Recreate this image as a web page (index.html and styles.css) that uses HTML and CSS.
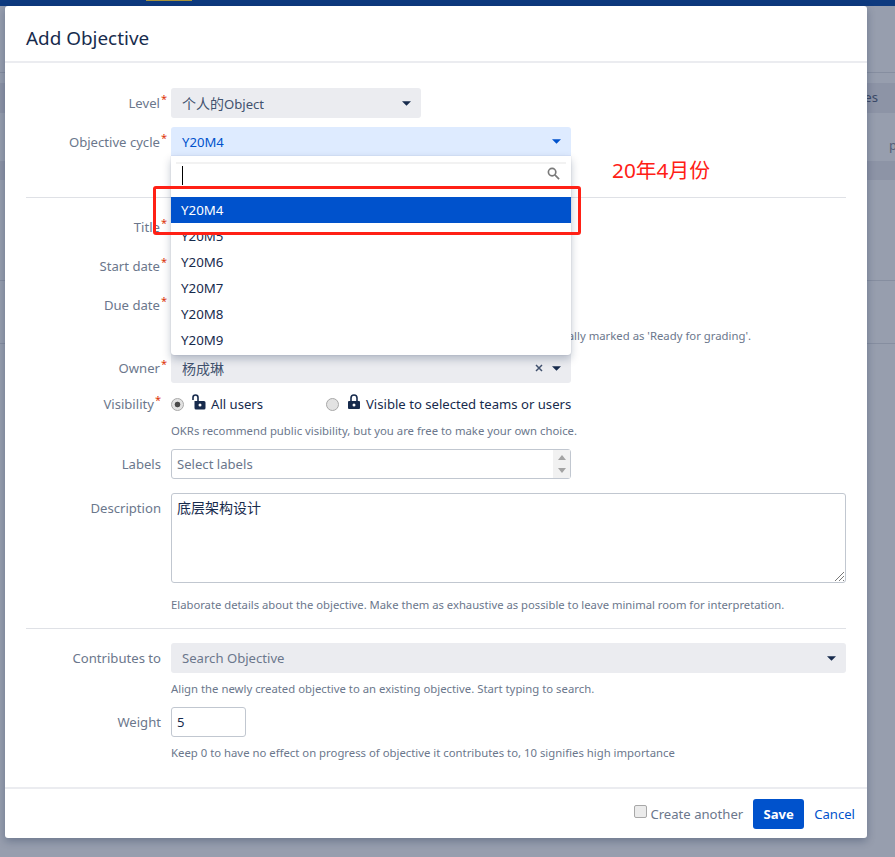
FILE: index.html
```html
<!DOCTYPE html>
<html lang="en">
<head>
<meta charset="utf-8">
<title>Add Objective</title>
<link rel="stylesheet" href="styles.css">
</head>
<body>
<div class="backdrop">
  <div class="topbar"><span class="topbar-mark"></span></div>
  <div class="bg-line bg-line-first"></div>
  <div class="bg-band bg-band-tab"><span>es</span></div>
  <div class="bg-p">p</div>
  <div class="bg-band bg-band-head"></div>
  <div class="bg-line bg-line-mid"></div>
  <div class="bg-line bg-line-row"></div>
</div>

<div class="modal">
  <header class="modal-head"><h2>Add Objective</h2></header>
  <main class="modal-body">
    <div class="row row-a">
      <label class="lbl">Level<sup>*</sup></label>
      <div class="select w250"><span><span class="cjk">个人的</span>Object</span><svg class="caret" viewBox="0 0 10 5"><path d="M0 0h10L5 5z"/></svg></div>
    </div>
    <div class="row row-b">
      <label class="lbl">Objective cycle<sup>*</sup></label>
      <div class="select select-open w400"><span>Y20M4</span><svg class="caret" viewBox="0 0 10 5"><path d="M0 0h10L5 5z"/></svg></div>
    </div>
    <hr class="rule rule-first">
    <div class="row row-title"><label class="lbl">Title<sup>*</sup></label></div>
    <div class="row row-date"><label class="lbl">Start date<sup>*</sup></label></div>
    <div class="row row-date"><label class="lbl">Due date<sup>*</sup></label></div>
    <p class="hint hint-due">Objective will be automatically marked as 'Ready for grading'.</p>
    <div class="row row-owner">
      <label class="lbl">Owner<sup>*</sup></label>
      <div class="select w400"><span class="cjk">杨成琳</span>
        <svg class="clear" viewBox="0 0 8 8"><path d="M1 1l6 6M7 1L1 7"/></svg>
        <svg class="caret caret-owner" viewBox="0 0 10 5"><path d="M0 0h10L5 5z"/></svg>
      </div>
    </div>
    <div class="row row-vis">
      <label class="lbl lbl-in">Visibility<sup>*</sup></label>
      <div class="radios">
        <span class="radio-item radio-all">
          <input type="radio" name="vis" class="radio" checked>
          <svg class="lock" viewBox="0 0 14 16"><path d="M2.500 7h9.500a1.500 1.500 0 0 1 1.500 1.500V14a1.500 1.500 0 0 1-1.500 1.500H4A1.500 1.500 0 0 1 2.500 14V7z"/><path class="lock-arc" d="M1 6V3.500a2.500 2.500 0 0 1 5 0V7"/><circle class="lock-hole" cx="8" cy="11" r="1.500"/></svg>
          All users
        </span>
        <span class="radio-item">
          <input type="radio" name="vis" class="radio">
          <svg class="lock" viewBox="0 0 14 16"><path d="M2 7h10a1 1 0 0 1 1 1v6a1 1 0 0 1-1 1H2a1 1 0 0 1-1-1V8a1 1 0 0 1 1-1z"/><path class="lock-arc" d="M4 7V4a3 3 0 0 1 6 0v3"/><circle class="lock-hole" cx="7" cy="11" r="1.500"/></svg>
          Visible to selected teams or users
        </span>
      </div>
    </div>
    <p class="hint hint-vis">OKRs recommend public visibility, but you are free to make your own choice.</p>
    <div class="row row-labels">
      <label class="lbl">Labels</label>
      <div class="listbox w400"><span>Select labels</span>
        <div class="spin"><svg viewBox="0 0 8 5"><path d="M4 0l4 5H0z"/></svg><svg viewBox="0 0 8 5"><path d="M0 0h8L4 5z"/></svg></div>
      </div>
    </div>
    <div class="row row-desc">
      <label class="lbl">Description</label>
      <div class="textarea cjk">底层架构设计
        <svg class="grip" viewBox="0 0 9 9"><path d="M0 9L9 0M4 9l5-5M8 9l1-1"/></svg>
      </div>
    </div>
    <p class="hint hint-desc">Elaborate details about the objective. Make them as exhaustive as possible to leave minimal room for interpretation.</p>
    <hr class="rule rule-second">
    <div class="row row-contrib">
      <label class="lbl">Contributes to</label>
      <div class="select wfull placeholder"><span>Search Objective</span><svg class="caret" viewBox="0 0 10 5"><path d="M0 0h10L5 5z"/></svg></div>
    </div>
    <p class="hint hint-contrib">Align the newly created objective to an existing objective. Start typing to search.</p>
    <div class="row row-weight">
      <label class="lbl">Weight</label>
      <div class="weight">5</div>
    </div>
    <p class="hint hint-weight">Keep 0 to have no effect on progress of objective it contributes to, 10 signifies high importance</p>
  </main>
  <footer class="modal-foot">
    <input type="checkbox" class="check">
    <span class="create">Create another</span>
    <button class="save">Save</button>
    <a class="cancel">Cancel</a>
  </footer>
</div>

<div class="dropdown">
  <div class="search">
    <span class="cursor"></span>
    <svg class="search-icon" viewBox="0 0 14 14"><circle cx="5.500" cy="5.500" r="4"/><path d="M8.500 8.500L13 13"/></svg>
  </div>
  <ul class="options">
    <li class="active">Y20M4</li>
    <li>Y20M5</li>
    <li>Y20M6</li>
    <li>Y20M7</li>
    <li>Y20M8</li>
    <li>Y20M9</li>
  </ul>
</div>

<div class="callout"></div>
<div class="callout-note">20年4月份</div>
</body>
</html>
```

FILE: styles.css
```css
* { box-sizing: border-box; }
html, body { margin: 0; height: 100%; }
body {
  position: relative;
  width: 895px;
  height: 857px;
  overflow: hidden;
  background: #979eae;
  font-family: "Noto Sans", "Noto Sans CJK SC", sans-serif;
  font-size: 13.125px;
  color: #172b4d;
}
.cjk { font-size: 14px; }

/* dimmed page behind the dialog */
.backdrop { height: 857px; }
.topbar { height: 6px; background: #0e3a7f; position: relative; }
.topbar-mark { position: absolute; left: 146px; top: 0; width: 46px; height: 1px; background: #a8933a; }
.bg-line { height: 1px; background: #868ea0; }
.bg-line-first { margin-top: 66px; }
.bg-band { background: #8d94a6; color: #3b4a68; }
.bg-band-tab { height: 30px; margin-top: 10px; text-align: right; padding: 5px 17px 0 0; }
.bg-p { height: 48px; padding: 22px 0 0 889px; color: #555f78; line-height: 20px; }
.bg-band-head { height: 19px; }
.bg-line-mid { margin-top: 100px; }
.bg-line-row { margin-top: 62px; }

/* dialog */
.modal {
  position: absolute;
  left: 5px;
  top: 6px;
  width: 862px;
  height: 832px;
  background: #fff;
  border-radius: 3px;
  box-shadow: 0 3px 8px rgba(9, 30, 66, .3);
  display: flex;
  flex-direction: column;
}
.modal-head { height: 57px; border-bottom: 2px solid #ebecf0; padding: 19px 21px 0; }
.modal-head h2 { margin: 0; font-size: 18.900px; line-height: 27px; font-weight: 400; }
.modal-body { flex: 1; padding: 25px 21px 0; }
.modal-foot {
  height: 51px;
  border-top: 2px solid #ebecf0;
  display: flex;
  align-items: center;
  justify-content: flex-end;
  padding: 0 12px 0 0;
}

/* form rows */
.row { display: flex; align-items: center; gap: 10px; }
.lbl { width: 135px; flex: none; text-align: right; color: #6b778c; line-height: 20px; white-space: nowrap; }
.lbl sup { color: #de350b; font-size: 11px; line-height: 0; vertical-align: 5px; margin-left: 1px; margin-right: -6px; }
.lbl-in sup { margin-right: 0; }
.row-a { height: 30px; }
.row-b { height: 29px; margin-top: 9px; }
.rule { border: 0; border-top: 1px solid #dfe1e6; margin: 0; }
.rule-first { margin-top: 41px; }
.row-title { height: 30px; margin-top: 14px; }
.row-date { height: 30px; margin-top: 9px; }
.row-owner { height: 30px; margin-top: 9px; }
.row-vis { height: 20px; margin-top: 11px; }
.row-labels { height: 30px; margin-top: 10px; }
.row-desc { height: 90px; margin-top: 14px; align-items: flex-start; }
.row-contrib { height: 30px; margin-top: 14px; }
.row-weight { height: 30px; margin-top: 10px; }
.rule-second { margin-top: 15px; }

.row-desc .lbl { padding-top: 5px; }

.hint { margin: 0 0 0 145px; font-size: 11.330px; line-height: 16px; color: #6b778c; white-space: nowrap; }
.hint-due { margin-left: 0; width: 725px; text-align: right; height: 16px; margin-top: 8px; margin-bottom: 9px; }
.hint-vis { margin-top: 9px; }
.hint-desc { margin-top: 14px; font-size: 11.250px; }
.hint-contrib { margin-top: 8px; }
.hint-weight { margin-top: 8px; }

.select {
  height: 30px;
  border-radius: 3px;
  background: #ebecf0;
  color: #42526e;
  display: flex;
  align-items: center;
  justify-content: space-between;
  padding: 0 10px 0 11px;
  flex: none;
}
.w250 { width: 250px; }
.w400 { width: 400px; }
.wfull { width: 675px; }
.select-open { background: #deebff; color: #0052cc; border-radius: 3px 3px 0 0; height: 29px; }
.select-open .caret { fill: #0052cc; }
.placeholder { color: #6b778c; }
.caret { width: 9px; height: 5px; fill: #172b4d; flex: none; }
.caret-owner { margin-left: 9px; }
.clear { width: 8px; height: 8px; margin-left: auto; stroke: #42526e; stroke-width: 1.500; fill: none; flex: none; }

.radios { display: flex; align-items: center; height: 20px; }
.radio-item { display: flex; align-items: center; white-space: nowrap; }
.radio-all { width: 155px; }
.radio {
  appearance: none;
  width: 13px;
  height: 13px;
  margin: 0 8px 0 0;
  border-radius: 50%;
  border: 1px solid #a8a8a8;
  background: #e2e2e2;
}
.radio:checked { background: radial-gradient(circle, #4a4a4a 0 2.500px, #e2e2e2 3.200px); }
.lock { width: 14px; height: 16px; margin: -4px 5px 0 0; fill: #172b4d; }
.lock-arc { fill: none; stroke: #172b4d; stroke-width: 1.600; }
.lock-hole { fill: #fff; }

.listbox {
  height: 30px;
  border: 1px solid #c1c7d0;
  border-radius: 3px;
  display: flex;
  align-items: center;
  padding-left: 5px;
  color: #6b778c;
  position: relative;
  flex: none;
}
.spin {
  position: absolute;
  right: 0;
  top: 0;
  bottom: 0;
  width: 17px;
  background: #f1f1f1;
  display: flex;
  flex-direction: column;
  align-items: center;
  justify-content: center;
  gap: 8px;
}
.spin svg { width: 8px; height: 5px; fill: #a3a3a3; }

.textarea {
  position: relative;
  width: 675px;
  height: 90px;
  border: 1px solid #c1c7d0;
  border-radius: 3px;
  padding: 4px 5px;
  line-height: 20px;
  flex: none;
}
.grip { position: absolute; right: 1px; bottom: 1px; width: 9px; height: 9px; stroke: #555; stroke-width: .8; fill: none; }

.weight {
  width: 75px;
  height: 30px;
  border: 1px solid #c1c7d0;
  border-radius: 3px;
  padding: 4px 5px;
  line-height: 20px;
  flex: none;
}

/* footer */
.check {
  appearance: none;
  width: 13px;
  height: 13px;
  margin: -4px 3px 0 0;
  border: 1px solid #a8a8a8;
  border-radius: 2px;
  background: #ebebeb;
}
.create { color: #6b778c; margin-right: 10px; padding-top: 1px; }
.save {
  width: 51px;
  height: 30px;
  border: 0;
  border-radius: 3px;
  background: #0052cc;
  color: #fff;
  font: 700 13.125px "Noto Sans", sans-serif;
  padding: 0;
  margin-right: 10px;
}
.cancel { color: #0052cc; padding-top: 1px; }

/* open dropdown, laid over the form */
.dropdown {
  position: absolute;
  left: 171px;
  top: 156px;
  width: 400px;
  height: 199px;
  background: #fff;
  border-radius: 0 0 3px 3px;
  box-shadow: 0 4px 8px rgba(9, 30, 66, .25), 0 0 1px rgba(9, 30, 66, .31);
}
.search { position: relative; height: 41px; }
.search::before { content: ""; position: absolute; left: 5px; right: 5px; top: 6px; height: 2px; background: #f2f2f2; }
.cursor { position: absolute; left: 11px; top: 10px; width: 1px; height: 19px; background: #000; }
.search-icon { position: absolute; right: 11px; top: 11px; width: 13px; height: 13px; fill: none; stroke: #7a7a7a; stroke-width: 1.800; }
.options { list-style: none; margin: 0; padding: 0; font-size: 13.300px; }
.options li { height: 26px; line-height: 26px; padding-left: 10px; }
.options .active { background: #0052cc; color: #fff; }

/* annotations added on top of the screenshot */
.callout {
  position: absolute;
  left: 153px;
  top: 186px;
  width: 428px;
  height: 49px;
  border: 3px solid #ff2015;
  border-radius: 3px;
}
.callout-note {
  position: absolute;
  left: 612px;
  top: 156px;
  color: #ff2015;
  font-size: 20.800px;
  line-height: 28px;
  white-space: nowrap;
}
```
